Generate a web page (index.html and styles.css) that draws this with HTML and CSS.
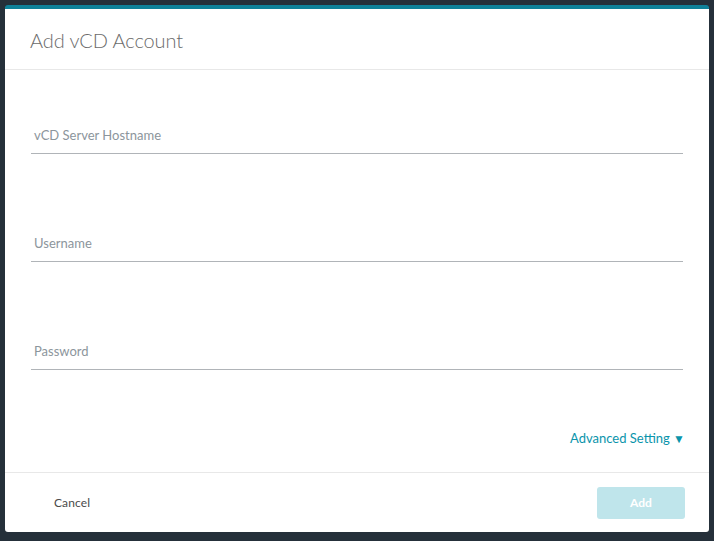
FILE: index.html
```html
<!DOCTYPE html>
<html lang="en">
<head>
<meta charset="utf-8">
<title>Add vCD Account</title>
<link rel="stylesheet" href="styles.css">
</head>
<body>
  <div class="modal">
    <header class="modal-header">
      <h1 class="modal-title">Add vCD Account</h1>
    </header>
    <section class="modal-body">
      <label class="field field-first">
        <span class="field-label">vCD Server Hostname</span>
      </label>
      <label class="field">
        <span class="field-label">Username</span>
      </label>
      <label class="field">
        <span class="field-label">Password</span>
      </label>
      <div class="advanced">
        <a class="advanced-link">Advanced Setting <span class="caret">▼</span></a>
      </div>
    </section>
    <footer class="modal-footer">
      <button class="btn btn-link" type="button">Cancel</button>
      <button class="btn btn-primary" type="button" disabled>Add</button>
    </footer>
  </div>
</body>
</html>
```

FILE: styles.css
```css
* {
  box-sizing: border-box;
}

html, body {
  margin: 0;
  height: 100%;
}

body {
  background: #25303a;
  padding: 5px;
  font-family: Lato, "Open Sans", sans-serif;
}

.modal {
  width: 704px;
  height: 527px;
  background: #ffffff;
  border-top: 4px solid #0f8199;
  border-radius: 3px;
  display: flex;
  flex-direction: column;
}

.modal-header {
  height: 61px;
  border-bottom: 1px solid #e8e8e8;
  padding: 0 25px;
  display: flex;
  align-items: center;
}

.modal-title {
  margin: 0;
  font-weight: 300;
  font-size: 20px;
  color: #6b6b6b;
  line-height: 24px;
  margin-top: 2px;
  letter-spacing: -0.1px;
}

.modal-body {
  flex: 1;
  padding: 55px 26px 0;
  display: flex;
  flex-direction: column;
}

.field {
  display: block;
  padding: 0 3px 8px;
  border-bottom: 1px solid #b0b4b8;
  margin-top: 79px;
}

.field-first {
  margin-top: 0;
}

.field-label {
  display: block;
  font-size: 13px;
  line-height: 20px;
  color: #8c959c;
}

.advanced {
  margin-top: 58px;
  display: flex;
  justify-content: flex-end;
}

.advanced-link {
  font-size: 13px;
  line-height: 20px;
  color: #0a94ab;
  margin-right: -2px;
}

.caret {
  font-size: 12px;
  vertical-align: 0;
}

.modal-footer {
  height: 60px;
  border-top: 1px solid #e8e8e8;
  padding: 0 24px 0 26px;
  display: flex;
  align-items: center;
  justify-content: space-between;
}

.btn {
  font-family: Lato, "Open Sans", sans-serif;
  border: none;
  background: none;
  font-size: 12px;
  height: 32px;
  border-radius: 3px;
  padding: 0;
}

.btn-link {
  color: #4a4a4a;
  padding: 0 23px;
  font-weight: 400;
  letter-spacing: 0.1px;
}

.btn-primary {
  width: 88px;
  background: #bfe5eb;
  color: #ffffff;
  font-weight: 700;
}
```
